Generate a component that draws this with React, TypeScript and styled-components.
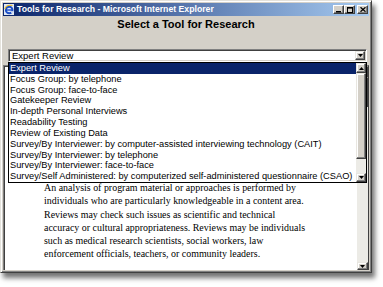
import React from "react";
import styled, { createGlobalStyle } from "styled-components";

const Global = createGlobalStyle`
  html, body { margin: 0; padding: 0; background: #fff; }
  body { width: 383px; height: 287px; overflow: hidden; }
`;

const Page = styled.div`
  width: 383px;
  height: 287px;
  background: #fff;
`;

const Win = styled.div`
  position: relative;
  width: 372px;
  height: 273px;
  box-sizing: border-box;
  background: #d4d0c8;
  border: 1px solid;
  border-color: #e4e2dc #404040 #404040 #e4e2dc;
  padding: 2px;
  box-shadow: inset 1px 1px 0 #fff, inset -1px -1px 0 #808080,
    3px 5px 5px rgba(0, 0, 0, 0.55);
  display: flex;
  flex-direction: column;
`;

const TitleBar = styled.div`
  height: 13px;
  flex: none;
  display: flex;
  align-items: center;
  padding: 0 1px;
  background: linear-gradient(to right, #0a246a, #a6caf0);
`;

const TitleText = styled.span`
  margin-left: 3px;
  flex: 1;
  color: #fff;
  font: bold 8.7px/13px "Liberation Sans", Arial, sans-serif;
  white-space: nowrap;
`;

const CaptionButtons = styled.div`
  display: flex;
  align-items: center;
`;

const CapBtn = styled.div<{ $gap?: boolean }>`
  width: 11px;
  height: 9px;
  box-sizing: border-box;
  margin-left: ${(p) => (p.$gap ? "2px" : "0")};
  background: #d4d0c8;
  border: 1px solid;
  border-color: #fff #404040 #404040 #fff;
  box-shadow: inset -1px -1px 0 #808080;
  display: flex;
  align-items: center;
  justify-content: center;
`;

const TopFrame = styled.div`
  height: 49px;
  flex: none;
  display: flex;
  flex-direction: column;
  align-items: center;
`;

const Heading = styled.div`
  margin-top: 2px;
  font: bold 11px/13px "Liberation Sans", Arial, sans-serif;
  color: #000;
`;

const SelectWrap = styled.div`
  position: relative;
  align-self: flex-start;
  margin: 18px 0 0 5px;
  width: 359px;
  height: 13px;
  z-index: 3;
`;

const SelectBox = styled.div`
  height: 13px;
  box-sizing: border-box;
  background: #fff;
  border: 1px solid;
  border-color: #808080 #fff #fff #808080;
  box-shadow: inset 1px 1px 0 #404040, inset -1px -1px 0 #d4d0c8;
  display: flex;
  align-items: center;
  padding: 0 1px 0 3px;
`;

const SelectText = styled.span`
  flex: 1;
  font: 9.5px/11px "Liberation Sans", Arial, sans-serif;
  color: #000;
`;

const ArrowBtn = styled.div<{ $w?: number; $h?: number }>`
  width: ${(p) => p.$w ?? 10}px;
  height: ${(p) => p.$h ?? 9}px;
  flex: none;
  box-sizing: border-box;
  background: #d4d0c8;
  border: 1px solid;
  border-color: #e8e6e0 #404040 #404040 #e8e6e0;
  box-shadow: inset -1px -1px 0 #808080, inset 1px 1px 0 #fff;
  display: flex;
  align-items: center;
  justify-content: center;
`;

const DropList = styled.div`
  position: absolute;
  top: 100%;
  left: 0;
  width: 359px;
  height: 121px;
  box-sizing: border-box;
  border: 1px solid #000;
  background: #fff;
  display: flex;
`;

const Items = styled.div`
  flex: 1;
  display: flex;
  flex-direction: column;
  overflow: hidden;
`;

const Item = styled.div<{ $active?: boolean }>`
  height: 10.82px;
  flex: none;
  padding-left: 1px;
  font: 9.25px/10.82px "Liberation Sans", Arial, sans-serif;
  white-space: nowrap;
  color: ${(p) => (p.$active ? "#fff" : "#000")};
  background: ${(p) => (p.$active ? "#0a246a" : "transparent")};
`;

const ListScroll = styled.div`
  width: 10px;
  flex: none;
  display: flex;
  flex-direction: column;
  background: #ecebe6;
`;

const Thumb = styled.div<{ $h: number }>`
  height: ${(p) => p.$h}px;
  flex: none;
  box-sizing: border-box;
  background: #d4d0c8;
  border: 1px solid;
  border-color: #e8e6e0 #404040 #404040 #e8e6e0;
  box-shadow: inset -1px -1px 0 #808080, inset 1px 1px 0 #fff;
`;

const Spacer = styled.div`
  flex: 1;
`;

const BodyFrame = styled.div`
  flex: 1;
  display: flex;
  min-height: 0;
  border-top: 1px solid #808080;
  border-left: 1px solid #808080;
  border-right: 1px solid #404040;
  box-shadow: inset 1px 1px 0 #404040;
`;

const Content = styled.div`
  flex: 1;
  background: #fff;
  padding: 114px 0 0 39px;
  margin: 1px 0 0 1px;
  font: 9.95px/13.3px "Liberation Serif", "Times New Roman", serif;
  color: #000;
  white-space: nowrap;
`;

const BodyScroll = styled.div`
  width: 11px;
  flex: none;
  display: flex;
  flex-direction: column;
  background: #ecebe6;
`;

const Arrow = ({ up }: { up?: boolean }) => (
  <svg width="5" height="3" viewBox="0 0 5 3">
    <path d={up ? "M0 3 L5 3 L2.5 0 Z" : "M0 0 L5 0 L2.5 3 Z"} fill="#000" />
  </svg>
);

const IEIcon = () => (
  <svg width="10" height="11" viewBox="0 0 10 11">
    <rect x="0" y="0" width="10" height="11" fill="#dfe8f5" />
    <circle cx="5.2" cy="6" r="3.3" fill="none" stroke="#1e50c8" strokeWidth="2" />
    <path d="M2 6 H8.5" stroke="#1e50c8" strokeWidth="1.4" />
    <path d="M7 8 L9.5 8" stroke="#dfe8f5" strokeWidth="1.6" />
    <path d="M0.8 5 Q2 0.5 8.5 1.5" fill="none" stroke="#e8b820" strokeWidth="1.1" />
  </svg>
);

const items = [
  "Expert Review",
  "Focus Group: by telephone",
  "Focus Group: face-to-face",
  "Gatekeeper Review",
  "In-depth Personal Interviews",
  "Readability Testing",
  "Review of Existing Data",
  "Survey/By Interviewer: by computer-assisted interviewing technology (CAIT)",
  "Survey/By Interviewer: by telephone",
  "Survey/By Interviewer: face-to-face",
  "Survey/Self Administered: by computerized self-administered questionnaire (CSAO)",
];

export default function App() {
  return (
    <Page>
      <Global />
      <Win>
        <TitleBar>
          <IEIcon />
          <TitleText>Tools for Research - Microsoft Internet Explorer</TitleText>
          <CaptionButtons>
            <CapBtn>
              <svg width="5" height="6" viewBox="0 0 5 6">
                <rect x="0" y="4" width="5" height="1.5" fill="#000" />
              </svg>
            </CapBtn>
            <CapBtn>
              <svg width="6" height="6" viewBox="0 0 6 6">
                <rect x="0.5" y="0.5" width="5" height="5" fill="none" stroke="#000" strokeWidth="1" />
                <rect x="0" y="0" width="6" height="1.6" fill="#000" />
              </svg>
            </CapBtn>
            <CapBtn $gap>
              <svg width="6" height="5" viewBox="0 0 6 5">
                <path d="M0.5 0.3 L5.5 4.7 M5.5 0.3 L0.5 4.7" stroke="#000" strokeWidth="1.3" />
              </svg>
            </CapBtn>
          </CaptionButtons>
        </TitleBar>

        <TopFrame>
          <Heading>Select a Tool for Research</Heading>
          <SelectWrap>
            <SelectBox>
              <SelectText>Expert Review</SelectText>
              <ArrowBtn>
                <Arrow />
              </ArrowBtn>
            </SelectBox>
            <DropList>
              <Items>
                {items.map((t, i) => (
                  <Item key={t} $active={i === 0}>
                    {t}
                  </Item>
                ))}
              </Items>
              <ListScroll>
                <ArrowBtn $w={10} $h={10}>
                  <Arrow up />
                </ArrowBtn>
                <Thumb $h={86} />
                <Spacer />
                <ArrowBtn $w={10} $h={9}>
                  <Arrow />
                </ArrowBtn>
              </ListScroll>
            </DropList>
          </SelectWrap>
        </TopFrame>

        <BodyFrame>
          <Content>
            An analysis of program material or approaches is performed by
            <br />
            individuals who are particularly knowledgeable in a content area.
            <br />
            Reviews may check such issues as scientific and technical
            <br />
            accuracy or cultural appropriateness. Reviews may be individuals
            <br />
            such as medical research scientists, social workers, law
            <br />
            enforcement officials, teachers, or community leaders.
          </Content>
          <BodyScroll>
            <ArrowBtn $w={11} $h={11}>
              <Arrow up />
            </ArrowBtn>
            <Thumb $h={30} />
            <Spacer />
            <ArrowBtn $w={11} $h={8}>
              <Arrow />
            </ArrowBtn>
          </BodyScroll>
        </BodyFrame>
      </Win>
    </Page>
  );
}
